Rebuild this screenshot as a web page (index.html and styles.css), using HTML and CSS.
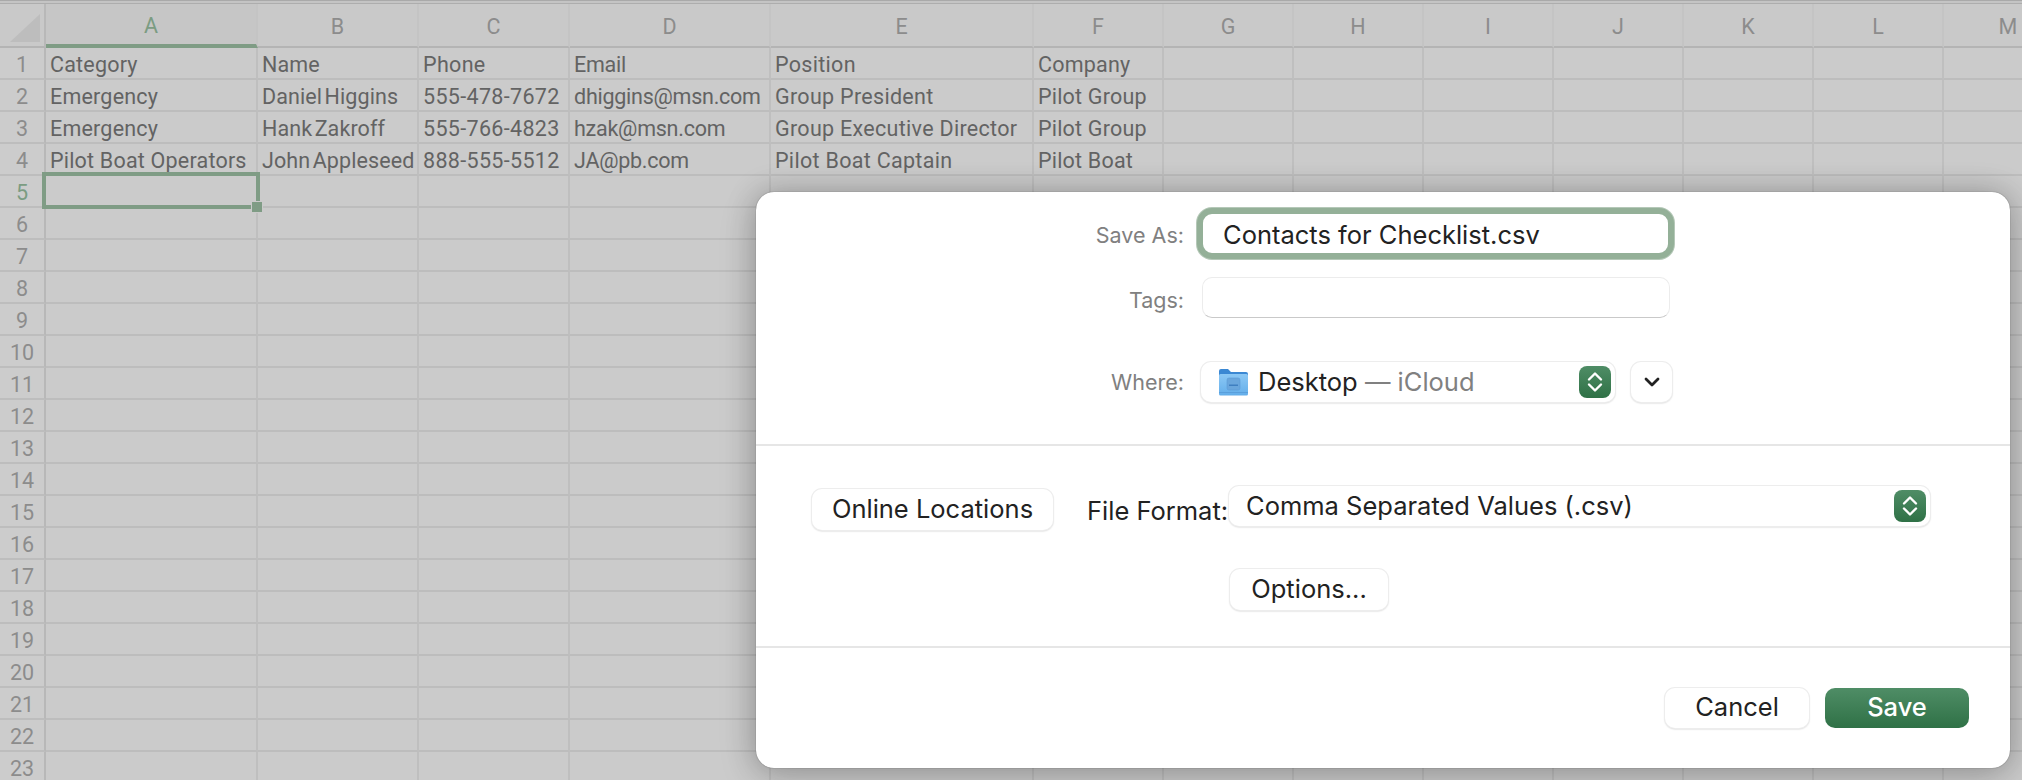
FILE: index.html
```html
<!DOCTYPE html>
<html lang="en">
<head>
  <meta charset="UTF-8" />
  <title>Save As</title>
  <link rel="stylesheet" href="styles.css">
</head>
<body>
  <div class="sheet">
    <table class="grid">
      <colgroup>
        <col class="col-index"><col class="col-a"><col class="col-b"><col class="col-c"><col class="col-d"><col class="col-e">
        <col class="col-std"><col class="col-std"><col class="col-std"><col class="col-std"><col class="col-std"><col class="col-std"><col class="col-std"><col class="col-std">
      </colgroup>
      <thead>
        <tr>
          <th class="corner"><span class="corner-mark"></span></th>
          <th class="selected-col">A</th><th>B</th><th>C</th><th>D</th><th>E</th><th>F</th><th>G</th><th>H</th><th>I</th><th>J</th><th>K</th><th>L</th><th>M</th>
        </tr>
      </thead>
      <tbody>
        <tr><th>1</th><td>Category</td><td>Name</td><td>Phone</td><td>Email</td><td>Position</td><td>Company</td><td></td><td></td><td></td><td></td><td></td><td></td><td></td></tr>
        <tr><th>2</th><td>Emergency</td><td>Daniel Higgins</td><td>555-478-7672</td><td>dhiggins@msn.com</td><td>Group President</td><td>Pilot Group</td><td></td><td></td><td></td><td></td><td></td><td></td><td></td></tr>
        <tr><th>3</th><td>Emergency</td><td>Hank Zakroff</td><td>555-766-4823</td><td>hzak@msn.com</td><td>Group Executive Director</td><td>Pilot Group</td><td></td><td></td><td></td><td></td><td></td><td></td><td></td></tr>
        <tr><th>4</th><td>Pilot Boat Operators</td><td>John Appleseed</td><td>888-555-5512</td><td>JA@pb.com</td><td>Pilot Boat Captain</td><td>Pilot Boat</td><td></td><td></td><td></td><td></td><td></td><td></td><td></td></tr>
        <tr><th class="selected-row">5</th><td class="active-cell"></td><td></td><td></td><td></td><td></td><td></td><td></td><td></td><td></td><td></td><td></td><td></td><td></td></tr>
        <tr><th>6</th><td></td><td></td><td></td><td></td><td></td><td></td><td></td><td></td><td></td><td></td><td></td><td></td><td></td></tr>
        <tr><th>7</th><td></td><td></td><td></td><td></td><td></td><td></td><td></td><td></td><td></td><td></td><td></td><td></td><td></td></tr>
        <tr><th>8</th><td></td><td></td><td></td><td></td><td></td><td></td><td></td><td></td><td></td><td></td><td></td><td></td><td></td></tr>
        <tr><th>9</th><td></td><td></td><td></td><td></td><td></td><td></td><td></td><td></td><td></td><td></td><td></td><td></td><td></td></tr>
        <tr><th>10</th><td></td><td></td><td></td><td></td><td></td><td></td><td></td><td></td><td></td><td></td><td></td><td></td><td></td></tr>
        <tr><th>11</th><td></td><td></td><td></td><td></td><td></td><td></td><td></td><td></td><td></td><td></td><td></td><td></td><td></td></tr>
        <tr><th>12</th><td></td><td></td><td></td><td></td><td></td><td></td><td></td><td></td><td></td><td></td><td></td><td></td><td></td></tr>
        <tr><th>13</th><td></td><td></td><td></td><td></td><td></td><td></td><td></td><td></td><td></td><td></td><td></td><td></td><td></td></tr>
        <tr><th>14</th><td></td><td></td><td></td><td></td><td></td><td></td><td></td><td></td><td></td><td></td><td></td><td></td><td></td></tr>
        <tr><th>15</th><td></td><td></td><td></td><td></td><td></td><td></td><td></td><td></td><td></td><td></td><td></td><td></td><td></td></tr>
        <tr><th>16</th><td></td><td></td><td></td><td></td><td></td><td></td><td></td><td></td><td></td><td></td><td></td><td></td><td></td></tr>
        <tr><th>17</th><td></td><td></td><td></td><td></td><td></td><td></td><td></td><td></td><td></td><td></td><td></td><td></td><td></td></tr>
        <tr><th>18</th><td></td><td></td><td></td><td></td><td></td><td></td><td></td><td></td><td></td><td></td><td></td><td></td><td></td></tr>
        <tr><th>19</th><td></td><td></td><td></td><td></td><td></td><td></td><td></td><td></td><td></td><td></td><td></td><td></td><td></td></tr>
        <tr><th>20</th><td></td><td></td><td></td><td></td><td></td><td></td><td></td><td></td><td></td><td></td><td></td><td></td><td></td></tr>
        <tr><th>21</th><td></td><td></td><td></td><td></td><td></td><td></td><td></td><td></td><td></td><td></td><td></td><td></td><td></td></tr>
        <tr><th>22</th><td></td><td></td><td></td><td></td><td></td><td></td><td></td><td></td><td></td><td></td><td></td><td></td><td></td></tr>
        <tr><th>23</th><td></td><td></td><td></td><td></td><td></td><td></td><td></td><td></td><td></td><td></td><td></td><td></td><td></td></tr>
      </tbody>
    </table>
  </div>

  <div class="dialog">
    <section class="dialog-top">
      <div class="field-row save-row">
        <label class="field-label">Save As:</label>
        <div class="name-field">Contacts for Checklist.csv</div>
      </div>
      <div class="field-row tags-row">
        <label class="field-label">Tags:</label>
        <div class="tags-field"></div>
      </div>
      <div class="field-row where-row">
        <label class="field-label">Where:</label>
        <div class="popup where-popup">
          <svg class="folder" width="29" height="28" viewBox="0 0 29 28">
            <defs>
              <linearGradient id="folderBody" x1="0" y1="0" x2="0" y2="1">
                <stop offset="0" stop-color="#8cc8f5"/>
                <stop offset="1" stop-color="#63aeea"/>
              </linearGradient>
            </defs>
            <path d="M0 3a2 2 0 0 1 2-2h7l3 3h15a2 2 0 0 1 2 2v6H0z" fill="#3b88d3"/>
            <path d="M0 7.5a1.5 1.5 0 0 1 1.5-1.500h26a1.500 1.500 0 0 1 1.500 1.500V26a1.500 1.500 0 0 1-1.500 1.500h-26A1.500 1.500 0 0 1 0 26z" fill="url(#folderBody)"/>
            <rect x="8" y="10" width="13" height="12" rx="2" fill="#6aa6dc" stroke="#5b9ad6" stroke-width=".6"/>
            <rect x="10" y="16.500" width="9" height="1.500" fill="#3f7fc0"/>
            <rect x="0" y="24" width="29" height="1" fill="#5a9fdc"/>
          </svg>
          <span class="popup-text">Desktop <span class="muted">— iCloud</span></span>
          <span class="stepper">
            <svg width="18" height="26" viewBox="0 0 18 26" fill="none" stroke="#fff" stroke-width="2.4" stroke-linecap="round" stroke-linejoin="round"><path d="M3 10.500l6-6 6 6"/><path d="M3 15.500l6 6 6-6"/></svg>
          </span>
        </div>
        <button class="btn chevron-btn">
          <svg width="16" height="10" viewBox="0 0 16 10" fill="none" stroke="#222" stroke-width="2.800" stroke-linecap="round" stroke-linejoin="round"><path d="M2 2l6 6 6-6"/></svg>
        </button>
      </div>
    </section>

    <section class="dialog-middle">
      <div class="format-row">
        <button class="btn online-btn">Online Locations</button>
        <span class="format-label">File Format:</span>
        <div class="popup format-popup">
          <span class="popup-text">Comma Separated Values (.csv)</span>
          <span class="stepper">
            <svg width="18" height="26" viewBox="0 0 18 26" fill="none" stroke="#fff" stroke-width="2.4" stroke-linecap="round" stroke-linejoin="round"><path d="M3 10.500l6-6 6 6"/><path d="M3 15.500l6 6 6-6"/></svg>
          </span>
        </div>
      </div>
      <button class="btn options-btn">Options...</button>
    </section>

    <section class="dialog-bottom">
      <button class="btn action-btn">Cancel</button>
      <button class="btn action-btn primary">Save</button>
    </section>
  </div>
</body>
</html>
```

FILE: styles.css
```css
body {
  margin: 0;
  width: 2022px;
  height: 780px;
  overflow: hidden;
  position: relative;
  background: #cbcbcb;
  font-family: "Inter", "Liberation Sans", sans-serif;
}

.sheet {
  height: 780px;
  padding-top: 4px;
  box-sizing: border-box;
  overflow: hidden;
  background: linear-gradient(#a9a9a9 0, #a9a9a9 1px, #c4c4c4 1px, #c4c4c4 3px, #adadad 3px, #adadad 4px, #cbcbcb 4px);
}

.grid {
  width: 2074px;
  table-layout: fixed;
  border-collapse: separate;
  border-spacing: 0;
  font-family: "Roboto", sans-serif;
  font-size: 21.5px;
  color: #636363;
}

.col-index { width: 46px; }
.col-a { width: 212px; }
.col-b { width: 161px; }
.col-c { width: 151px; }
.col-d { width: 201px; }
.col-e { width: 263px; }
.col-std { width: 130px; }

.grid th {
  font-weight: 400;
  color: #8c8c8c;
  background: #cccccc;
  padding: 2px 0 0;
  text-align: center;
  box-sizing: border-box;
  border-bottom: 2px solid #bdbdbd;
  border-right: 2px solid #c4c4c4;
}

.grid thead th {
  height: 44px;
  border-bottom-color: #b4b4b4;
  background: #c9c9c9;
}

.grid tbody th {
  border-right-color: #b8b8b8;
}

.grid td {
  height: 32px;
  box-sizing: border-box;
  padding: 2px 0 0 4px;
  white-space: nowrap;
  overflow: hidden;
  letter-spacing: 0.2px;
  border-bottom: 2px solid #bdbdbd;
  border-right: 2px solid #bfbfbf;
}

.grid td:nth-child(3) {
  letter-spacing: 0.1px;
  word-spacing: -3px;
}

.grid td:nth-child(4) {
  letter-spacing: 0.33px;
}

.grid td:nth-child(5) {
  letter-spacing: -0.25px;
}

.grid td:nth-child(6) {
  letter-spacing: 0.3px;
}

.grid thead .corner {
  position: relative;
  border-right-color: #b8b8b8;
}

.corner-mark {
  position: absolute;
  left: 10px;
  bottom: 4px;
  width: 30px;
  height: 28px;
  background: #bdbdbd;
  clip-path: polygon(100% 0, 100% 100%, 0 100%);
}

.grid thead .selected-col {
  color: #7b9c82;
  background: #c6c6c6;
  border-bottom: 4px solid #7f9c85;
}

.grid .selected-row {
  color: #7b9c82;
}

.grid .active-cell {
  position: relative;
  overflow: visible;
}

.active-cell::before {
  content: "";
  position: absolute;
  left: -4px;
  top: -4px;
  width: 218px;
  height: 37px;
  box-sizing: border-box;
  border: 4px solid #7f9c85;
}

.active-cell::after {
  content: "";
  position: absolute;
  left: 206px;
  top: 26px;
  width: 10px;
  height: 10px;
  background: #7f9c85;
  box-shadow: 0 0 0 1px #cbcbcb;
}

/* save dialog */
.dialog {
  position: absolute;
  left: 756px;
  top: 192px;
  width: 1254px;
  height: 576px;
  box-sizing: border-box;
  background: #fff;
  border-radius: 18px;
  box-shadow: 0 0 1px rgba(0, 0, 0, 0.6), 0 0 30px rgba(0, 0, 0, 0.22), 0 10px 40px rgba(0, 0, 0, 0.14);
  color: #222;
  font-size: 25.5px;
}

.dialog-top {
  height: 254px;
  box-sizing: border-box;
  padding-top: 16px;
  border-bottom: 2px solid #e6e6e6;
}

.field-row {
  display: flex;
  align-items: center;
}

.field-label {
  width: 428px;
  text-align: right;
  color: #808080;
  font-size: 21.5px;
}

.save-row {
  height: 51px;
}

.save-row .field-label {
  padding-top: 2px;
}

.name-field {
  margin-left: 13px;
  width: 477px;
  height: 51px;
  box-sizing: border-box;
  padding-left: 20px;
  line-height: 41px;
  border: 6px solid #94b098;
  border-radius: 15px;
  box-shadow: 0 0 0 1px #b5c8b8;
  background: #fff;
}

.tags-row {
  height: 41px;
  margin-top: 18px;
}

.tags-row .field-label {
  padding-top: 4px;
}

.tags-field {
  margin-left: 18px;
  width: 468px;
  height: 41px;
  box-sizing: border-box;
  border-radius: 10px;
  border: 1px solid #ececec;
  border-bottom: 1px solid #c9c9c9;
}

.where-row {
  height: 40px;
  margin-top: 44px;
}

.popup {
  display: flex;
  align-items: center;
  box-sizing: border-box;
  height: 40px;
  border-radius: 10px;
  background: #fff;
  box-shadow: 0 0 0 1px #ededed, 0 1px 2px rgba(0, 0, 0, 0.28);
  padding-right: 4px;
}

.where-popup {
  margin-left: 17px;
  width: 414px;
  padding-left: 18px;
}

.popup-text {
  flex: 1;
  white-space: nowrap;
  padding-bottom: 2px;
}

.where-popup .popup-text {
  margin-left: 10px;
}

.muted {
  color: #808080;
}

.stepper {
  width: 32px;
  height: 32px;
  border-radius: 8px;
  display: flex;
  align-items: center;
  justify-content: center;
  background: linear-gradient(#4f8d66, #2f7146);
}

.btn {
  display: flex;
  align-items: center;
  justify-content: center;
  box-sizing: border-box;
  height: 41px;
  padding: 0 0 2px;
  border: none;
  border-radius: 10px;
  background: #fff;
  box-shadow: 0 0 0 1px #ededed, 0 1px 2px rgba(0, 0, 0, 0.28);
  color: #222;
  font-family: inherit;
  font-size: 25.5px;
}

.chevron-btn {
  margin-left: 16px;
  width: 41px;
  height: 40px;
  padding: 0;
}

.dialog-middle {
  height: 202px;
  box-sizing: border-box;
  padding-top: 40px;
  border-bottom: 2px solid #e6e6e6;
}

.format-row {
  display: flex;
  align-items: flex-start;
  height: 44px;
  padding-left: 56px;
}

.online-btn {
  width: 241px;
  margin-top: 3px;
}

.format-label {
  margin-left: 34px;
  width: 142px;
  margin-top: 9px;
  white-space: nowrap;
}

.format-popup {
  width: 701px;
  padding-left: 17px;
}

.options-btn {
  margin: 39px 0 0 474px;
  width: 158px;
}

.dialog-bottom {
  display: flex;
  justify-content: flex-end;
  gap: 16px;
  padding: 40px 41px 0 0;
}

.action-btn {
  width: 144px;
  height: 40px;
  padding-bottom: 3px;
}

.primary {
  background: linear-gradient(#4f8d66, #2f7146);
  box-shadow: none;
  color: #fff;
  font-weight: 500;
}
```
